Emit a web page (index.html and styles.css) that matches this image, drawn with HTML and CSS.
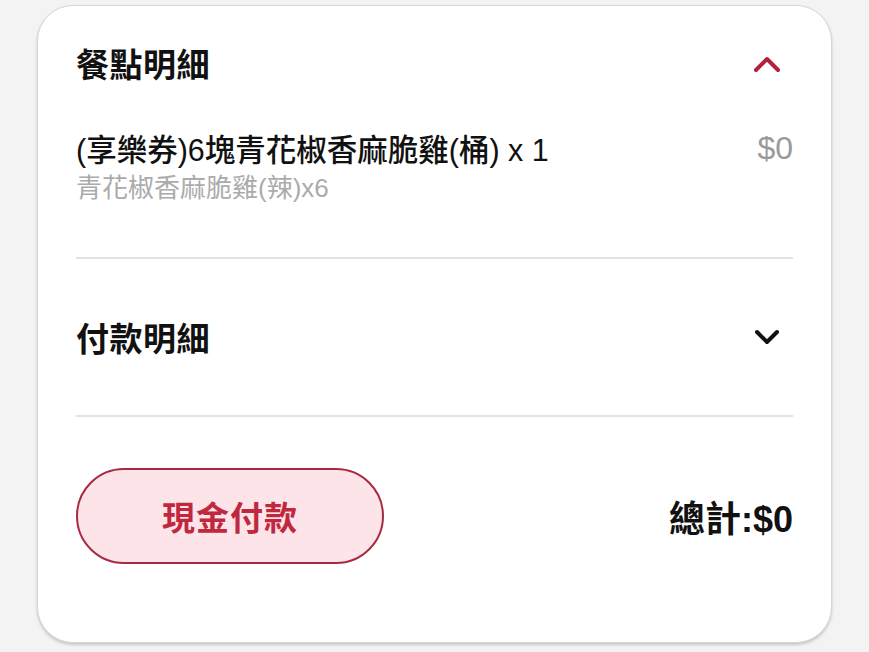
FILE: index.html
```html
<!DOCTYPE html>
<html lang="zh-Hant">
<head>
<meta charset="utf-8">
<link rel="stylesheet" href="styles.css">
</head>
<body>
<div class="card">
  <div class="sec-head first">
    <h2 class="title">餐點明細</h2>
    <svg class="chev" width="32" height="24" viewBox="0 0 32 24"><polyline points="5,19 16,8 27,19" fill="none" stroke="#b5203b" stroke-width="4" stroke-linecap="round" stroke-linejoin="round"/></svg>
  </div>
  <div class="item">
    <div class="item-row">
      <span class="item-name">(享樂券)6塊青花椒香麻脆雞(桶) x 1</span>
      <span class="item-price">$0</span>
    </div>
    <div class="item-sub">青花椒香麻脆雞(辣)x6</div>
  </div>
  <div class="divider"></div>
  <div class="sec-head second">
    <h2 class="title">付款明細</h2>
    <svg class="chev" width="32" height="24" viewBox="0 0 32 24"><polyline points="6,7 16,17 26,7" fill="none" stroke="#111" stroke-width="4" stroke-linecap="round" stroke-linejoin="round"/></svg>
  </div>
  <div class="divider"></div>
  <div class="footer">
    <button class="pay-btn">現金付款</button>
    <div class="total">總計:$0</div>
  </div>
</div>
</body>
</html>
```

FILE: styles.css
```css
* { box-sizing: border-box; }
html, body { margin: 0; padding: 0; }
body {
  background: #f3f3f3;
  font-family: "Liberation Sans", "Noto Sans CJK TC", sans-serif;
  color: #111;
  height: 652px;
  overflow: hidden;
}
.card {
  margin: 5px 37px 0;
  height: 638px;
  background: #fff;
  border: 1px solid #d6d6d6;
  border-radius: 36px;
  box-shadow: 0 2px 3px rgba(0,0,0,0.18);
  padding: 23px 38px 0;
}
.sec-head {
  display: flex;
  align-items: center;
  justify-content: space-between;
  height: 68px;
}
.sec-head.second {
  margin: 44px 0 44px;
}
.title {
  margin: 0;
  font-family: "Noto Sans CJK TC", sans-serif;
  font-weight: 700;
  font-size: 33px;
  line-height: 68px;
  letter-spacing: 0.5px;
}
.chev { margin-right: 10px; display: block; }
.item { margin-top: 31px; margin-bottom: 49px; }
.item-row {
  display: flex;
  justify-content: space-between;
  align-items: center;
  height: 40px;
}
.item-name {
  font-size: 30.5px;
  font-weight: 500;
  color: #111;
}
.item-price {
  font-size: 32px;
  color: #9a9a9a;
}
.item-sub {
  font-size: 26px;
  line-height: 40px;
  color: #ababab;
}
.divider {
  height: 2px;
  background: #e2e2e2;
}
.footer {
  display: flex;
  align-items: center;
  justify-content: space-between;
  margin-top: 51px;
}
.pay-btn {
  width: 308px;
  height: 96px;
  border: 2px solid #a82a42;
  border-radius: 48px;
  background: #fde4e8;
  color: #c0283f;
  font-family: "Noto Sans CJK TC", sans-serif;
  font-weight: 700;
  font-size: 33px;
  letter-spacing: 1px;
  padding: 0;
}
.total {
  font-family: "Liberation Sans", "Noto Sans CJK TC", sans-serif;
  font-weight: 700;
  font-size: 36px;
  color: #111;
}
```
